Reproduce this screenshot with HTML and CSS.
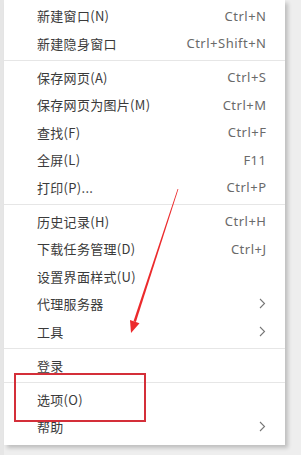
FILE: index.html
```html
<!DOCTYPE html>
<html lang="zh">
<head>
<meta charset="utf-8">
<link rel="stylesheet" href="styles.css">
</head>
<body>
<div class="page">
  <div class="menu">
    <div class="item"><span class="label">新建窗口(N)</span><span class="key">Ctrl+N</span></div>
    <div class="item"><span class="label">新建隐身窗口</span><span class="key">Ctrl+Shift+N</span></div>
    <div class="sep"></div>
    <div class="item"><span class="label">保存网页(A)</span><span class="key">Ctrl+S</span></div>
    <div class="item"><span class="label">保存网页为图片(M)</span><span class="key">Ctrl+M</span></div>
    <div class="item"><span class="label">查找(F)</span><span class="key">Ctrl+F</span></div>
    <div class="item"><span class="label">全屏(L)</span><span class="key">F11</span></div>
    <div class="item"><span class="label">打印(P)...</span><span class="key">Ctrl+P</span></div>
    <div class="sep"></div>
    <div class="item"><span class="label">历史记录(H)</span><span class="key">Ctrl+H</span></div>
    <div class="item"><span class="label">下载任务管理(D)</span><span class="key">Ctrl+J</span></div>
    <div class="item"><span class="label">设置界面样式(U)</span></div>
    <div class="item"><span class="label">代理服务器</span><svg class="chev" width="7" height="11" viewBox="0 0 7 11"><polyline points="1,1 5.5,5.5 1,10" fill="none" stroke="#777" stroke-width="1.1"/></svg></div>
    <div class="item"><span class="label">工具</span><svg class="chev" width="7" height="11" viewBox="0 0 7 11"><polyline points="1,1 5.5,5.5 1,10" fill="none" stroke="#777" stroke-width="1.1"/></svg></div>
    <div class="sep"></div>
    <div class="item"><span class="label">登录</span></div>
    <div class="sep"></div>
    <div class="item"><span class="label">选项(O)</span></div>
    <div class="item"><span class="label">帮助</span><svg class="chev" width="7" height="11" viewBox="0 0 7 11"><polyline points="1,1 5.5,5.5 1,10" fill="none" stroke="#777" stroke-width="1.1"/></svg></div>
  </div>
  <div class="highlight"></div>
  <svg class="arrow" width="301" height="455" viewBox="0 0 301 455">
    <polygon points="178.4,189.1 177.6,188.9 133.5,321.2 135.9,322" fill="#ec2a2c"/>
    <polygon points="131,333 130,320 139.5,323.2" fill="#ec2a2c"/>
  </svg>
</div>
</body>
</html>
```

FILE: styles.css
```css
html, body {
  margin: 0;
  padding: 0;
}
body {
  background: #ebebeb;
  width: 301px;
  height: 455px;
  overflow: hidden;
}
.page {
  position: relative;
  width: 301px;
  height: 455px;
  background: linear-gradient(to right, #e6e6e6 0, #e6e6e6 4px, #eeeeee 4px);
}
.menu {
  margin-left: 4px;
  width: 281px;
  height: 445px;
  box-sizing: border-box;
  padding-top: 2px;
  background: #ffffff;
  box-shadow: 3px 3px 4px rgba(0, 0, 0, 0.2);
  display: flex;
  flex-direction: column;
}
.item {
  height: 27.5px;
  flex: none;
  display: flex;
  align-items: center;
  justify-content: space-between;
  padding: 0 19px 0 33px;
}
.label {
  font-family: "Noto Sans CJK SC", "Noto Sans", sans-serif;
  font-size: 13px;
  letter-spacing: 0.3px;
  color: #3a3a3a;
}
.key {
  font-family: "Noto Sans", "Noto Sans CJK SC", sans-serif;
  font-size: 13px;
  letter-spacing: 0.5px;
  margin-right: -0.5px;
  color: #6a6a6a;
}
.sep {
  flex: none;
  height: 1px;
  background: #e6e6e6;
  margin: 3px 0 2.5px;
}
.highlight {
  position: absolute;
  left: 14px;
  top: 373px;
  width: 132px;
  height: 49px;
  box-sizing: border-box;
  border: 2px solid #d42f39;
}
.arrow {
  position: absolute;
  left: 0;
  top: 0;
}
```
